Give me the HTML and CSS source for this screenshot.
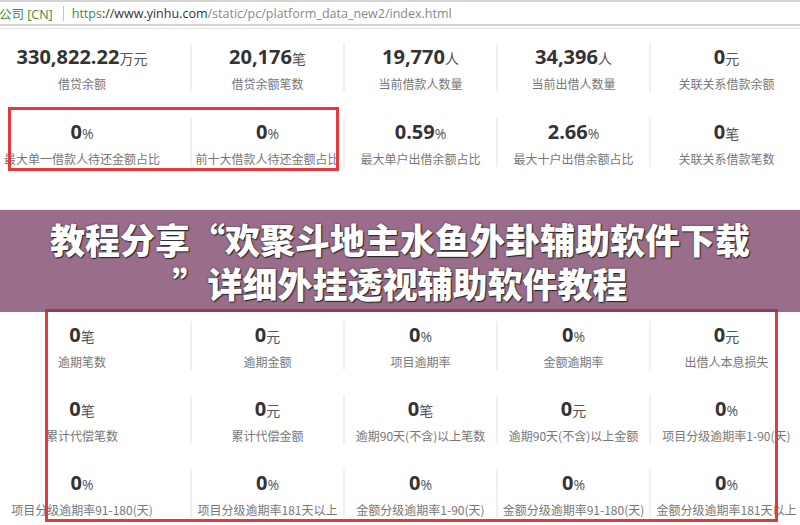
FILE: index.html
```html
<!DOCTYPE html>
<html lang="zh-CN">

<head>
    <meta charset="UTF-8">
    <meta name="viewport" content="width=device-width, initial-scale=1.0">
    <title>平台数据</title>
    <link rel="stylesheet" href="styles.css">
</head>

<body>
    <!-- Address bar -->
    <div class="address-bar">
        <span class="site-name">公司 [CN]</span>
        <span class="sep"></span>
        <span class="url"><span class="scheme">https</span><span class="host">://www.yinhu.com</span>/static/pc/platform_data_new2/index.html</span>
    </div>
    <div class="bar-line"></div>

    <!-- Operating data -->
    <div class="stats stats-top">
        <div class="cell"><p class="num">330,822.22<span class="unit">万元</span></p><p class="label">借贷余额</p></div>
        <div class="cell"><p class="num">20,176<span class="unit">笔</span></p><p class="label">借贷余额笔数</p></div>
        <div class="cell"><p class="num">19,770<span class="unit">人</span></p><p class="label">当前借款人数量</p></div>
        <div class="cell"><p class="num">34,396<span class="unit">人</span></p><p class="label">当前出借人数量</p></div>
        <div class="cell"><p class="num">0<span class="unit">元</span></p><p class="label">关联关系借款余额</p></div>

        <div class="cell"><p class="num">0<span class="unit">%</span></p><p class="label">最大单一借款人待还金额占比</p></div>
        <div class="cell"><p class="num">0<span class="unit">%</span></p><p class="label">前十大借款人待还金额占比</p></div>
        <div class="cell"><p class="num">0.59<span class="unit">%</span></p><p class="label">最大单户出借余额占比</p></div>
        <div class="cell"><p class="num">2.66<span class="unit">%</span></p><p class="label">最大十户出借余额占比</p></div>
        <div class="cell"><p class="num">0<span class="unit">笔</span></p><p class="label">关联关系借款笔数</p></div>
    </div>

    <div class="section-gap"></div>

    <!-- Overdue data -->
    <div class="stats stats-bottom">
        <div class="cell"><p class="num">0<span class="unit">笔</span></p><p class="label">逾期笔数</p></div>
        <div class="cell"><p class="num">0<span class="unit">元</span></p><p class="label">逾期金额</p></div>
        <div class="cell"><p class="num">0<span class="unit">%</span></p><p class="label">项目逾期率</p></div>
        <div class="cell"><p class="num">0<span class="unit">%</span></p><p class="label">金额逾期率</p></div>
        <div class="cell"><p class="num">0<span class="unit">元</span></p><p class="label">出借人本息损失</p></div>

        <div class="cell"><p class="num">0<span class="unit">笔</span></p><p class="label">累计代偿笔数</p></div>
        <div class="cell"><p class="num">0<span class="unit">元</span></p><p class="label">累计代偿金额</p></div>
        <div class="cell"><p class="num">0<span class="unit">笔</span></p><p class="label">逾期90天(不含)以上笔数</p></div>
        <div class="cell"><p class="num">0<span class="unit">元</span></p><p class="label">逾期90天(不含)以上金额</p></div>
        <div class="cell"><p class="num">0<span class="unit">%</span></p><p class="label">项目分级逾期率1-90(天)</p></div>

        <div class="cell"><p class="num">0<span class="unit">%</span></p><p class="label">项目分级逾期率91-180(天)</p></div>
        <div class="cell"><p class="num">0<span class="unit">%</span></p><p class="label">项目分级逾期率181天以上</p></div>
        <div class="cell"><p class="num">0<span class="unit">%</span></p><p class="label">金额分级逾期率1-90(天)</p></div>
        <div class="cell"><p class="num">0<span class="unit">%</span></p><p class="label">金额分级逾期率91-180(天)</p></div>
        <div class="cell"><p class="num">0<span class="unit">%</span></p><p class="label">金额分级逾期率181天以上</p></div>
    </div>

    <!-- Red highlight boxes -->
    <div class="mark mark-top"></div>
    <div class="mark mark-bottom"></div>

    <!-- Title banner -->
    <div class="banner">
        <div class="title-line">教程分享“欢聚斗地主水鱼外卦辅助软件下载</div>
        <div class="title-line">”详细外挂透视辅助软件教程</div>
    </div>
</body>

</html>
```

FILE: styles.css
```css
body {
    margin: 0;
    padding: 0;
    width: 800px;
    height: 525px;
    overflow: hidden;
    position: relative;
    background-color: white;
    font-family: 'Open Sans', 'Noto Sans CJK SC', sans-serif;
    color: #333;
}

/* Address bar */
.address-bar {
    height: 22px;
    border-top: 2px solid #d4d4d4;
    border-bottom: 2px solid #d4d4d4;
    display: flex;
    align-items: center;
    font-size: 12.5px;
    color: #888;
    white-space: nowrap;
}

.site-name {
    color: #3b8a45;
    margin-left: -1px;
}

.sep {
    width: 1px;
    height: 15px;
    background-color: #c4c4c4;
    margin: 0 8px 0 10px;
}

.scheme {
    color: #3b8a45;
}

.host {
    color: #333;
}

.bar-line {
    margin-top: 2px;
    border-top: 1px solid #e2e2e2;
}

/* Stat grids */
.stats {
    display: grid;
    grid-template-columns: 190px repeat(4, 153px);
    text-align: center;
}

.stats-top {
    margin-top: 14px;
    row-gap: 26px;
}

.stats-bottom {
    row-gap: 25px;
}

.section-gap {
    height: 43px;
    border-bottom: 1px solid #f0f0f0;
    box-sizing: border-box;
    margin-bottom: 111px;
}

.cell {
    height: 49px;
    border-left: 2px solid #f0f0f0;
    white-space: nowrap;
}

.cell:nth-child(5n+1) {
    border-left: none;
    padding-right: 26px;
}

.num {
    margin: 0;
    height: 28px;
    line-height: 28px;
    font-size: 20px;
    font-weight: bold;
    color: #333;
}

.unit {
    font-size: 14px;
    font-weight: normal;
    color: #555;
}

.label {
    margin: 5px 0 0;
    line-height: 16px;
    font-size: 12px;
    color: #777;
    font-family: 'Noto Sans CJK SC', sans-serif;
}

/* Highlight boxes */
.mark {
    position: absolute;
    border: 3px solid #e5393b;
    box-sizing: border-box;
}

.mark-top {
    left: 8px;
    top: 107px;
    width: 331px;
    height: 64px;
}

.mark-bottom {
    left: 45px;
    top: 309px;
    width: 733px;
    height: 213px;
}

/* Title banner */
.banner {
    position: absolute;
    left: 0;
    top: 210px;
    width: 100%;
    height: 102px;
    background-color: rgba(120, 60, 100, 0.75);
    display: flex;
    flex-direction: column;
    align-items: center;
    justify-content: center;
}

.title-line {
    height: 44px;
    line-height: 44px;
    font-family: 'Noto Sans CJK SC', sans-serif;
    font-size: 35px;
    font-weight: 900;
    color: white;
    text-shadow: 0 0 2px #333, 1px 1px 1px #222;
    white-space: nowrap;
}
```
